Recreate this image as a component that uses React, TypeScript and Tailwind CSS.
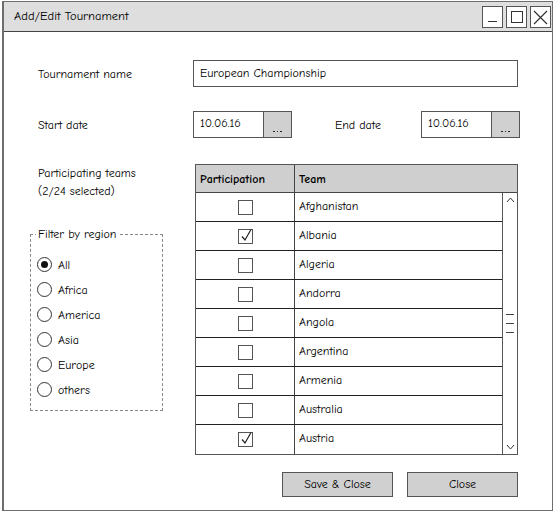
const font = { fontFamily: '"Comic Sans MS", "Comic Neue", "Liberation Sans", sans-serif' }

const teams = [
  { name: 'Afghanistan', on: false },
  { name: 'Albania', on: true },
  { name: 'Algeria', on: false },
  { name: 'Andorra', on: false },
  { name: 'Angola', on: false },
  { name: 'Argentina', on: false },
  { name: 'Armenia', on: false },
  { name: 'Australia', on: false },
  { name: 'Austria', on: true },
]

const regions = ['All', 'Africa', 'America', 'Asia', 'Europe', 'others']

function Checkbox({ on }: { on: boolean }) {
  return (
    <div className="relative w-[15px] h-[15px] border border-[#555] bg-white">
      {on && (
        <svg className="absolute left-[1px] -top-[2px]" width="14" height="15" viewBox="0 0 14 15">
          <path d="M2 8.5 L5 12 L11 1.5" fill="none" stroke="#222" strokeWidth="1.2" />
        </svg>
      )}
    </div>
  )
}

function Radio({ on }: { on: boolean }) {
  return (
    <div className="w-[15px] h-[15px] rounded-full border-[1.5px] border-[#333] flex items-center justify-center bg-white">
      {on && <div className="w-[7px] h-[7px] rounded-full bg-[#111]" />}
    </div>
  )
}

function DateField({ value }: { value: string }) {
  return (
    <div className="flex h-[27px]">
      <div className="w-[71px] border border-[#555] bg-white pl-[6px] flex items-center text-[12px] pb-[3px]">{value}</div>
      <div className="w-[28px] border border-l-0 border-[#555] bg-[#d0d0d0] flex items-end justify-center pb-[5px]">
        <div className="flex gap-[2px]">
          <div className="w-[1.5px] h-[1.5px] bg-[#222]" />
          <div className="w-[1.5px] h-[1.5px] bg-[#222]" />
          <div className="w-[1.5px] h-[1.5px] bg-[#222]" />
        </div>
      </div>
    </div>
  )
}

export default function App() {
  return (
    <div className="w-[556px] h-[513px] bg-white pt-[1px] pl-[2px] text-black" style={font}>
      <div className="w-[551px] h-[510px] border border-[#6e6e6e] border-l-2 flex flex-col">
        <div className="h-[30px] bg-[#dedede] border-b border-[#444] flex items-center justify-between pl-[10px] pr-[1px]">
          <span className="text-[12.5px]">Add/Edit Tournament</span>
          <div className="flex gap-[3px] pt-[1px]">
            <div className="w-[21px] h-[22px] border border-[#555] bg-white flex items-end justify-center pb-[5px]">
              <div className="w-[9px] h-[1.5px] bg-[#333]" />
            </div>
            <div className="w-[21px] h-[22px] border border-[#555] bg-white flex items-center justify-center">
              <div className="w-[12px] h-[12px] border-[1.5px] border-[#333]" />
            </div>
            <div className="w-[21px] h-[22px] border border-[#555] bg-white flex items-center justify-center">
              <svg width="15" height="15" viewBox="0 0 15 15">
                <path d="M1 1 L14 14 M14 1 L1 14" stroke="#333" strokeWidth="1.2" />
              </svg>
            </div>
          </div>
        </div>

        <div className="flex flex-col pt-[28px] pl-[34px]">
          <div className="flex items-center">
            <span className="w-[155px] text-[12px]">Tournament name</span>
            <div className="w-[325px] h-[27px] border border-[#555] bg-white pl-[6px] flex items-center text-[12px] pb-[2px]">
              European Championship
            </div>
          </div>

          <div className="flex items-center mt-[24px]">
            <span className="w-[155px] text-[12px]">Start date</span>
            <DateField value="10.06.16" />
            <span className="ml-[43px] w-[86px] text-[12px]">End date</span>
            <DateField value="10.06.16" />
          </div>

          <div className="flex mt-[26px]">
            <div className="w-[157px] flex flex-col">
              <div className="text-[12px] leading-[18px]">
                <div>Participating teams</div>
                <div>(2/24 selected)</div>
              </div>
              <fieldset className="mt-[27px] -ml-[8px] w-[133px] h-[184px] border border-dashed border-[#888] px-0">
                <legend className="ml-[5px] px-[2px] text-[12px] leading-[14px]">Filter by region</legend>
                <div className="flex flex-col gap-[10px] pl-[6px] pt-[16px]">
                  {regions.map((r, i) => (
                    <div key={r} className="flex items-center gap-[6px] h-[15px]">
                      <Radio on={i === 0} />
                      <span className="text-[12px]">{r}</span>
                    </div>
                  ))}
                </div>
              </fieldset>
            </div>

            <div className="flex flex-col">
              <div className="w-[323px] border border-[#555] flex flex-col">
                <div className="h-[28px] bg-[#cfcfcf] border-b border-[#444] flex text-[12px] font-bold">
                  <div className="w-[99px] border-r border-[#444] pl-[4px] flex items-center">Participation</div>
                  <div className="flex-1 pl-[4px] flex items-center">Team</div>
                </div>
                <div className="flex">
                  <div className="flex-1 flex flex-col">
                    {teams.map((t, i) => (
                      <div
                        key={t.name}
                        className={`h-[29px] flex text-[12px] ${i < teams.length - 1 ? 'border-b border-[#222]' : ''}`}
                      >
                        <div className="w-[99px] border-r border-[#444] flex items-center justify-center">
                          <Checkbox on={t.on} />
                        </div>
                        <div className="flex-1 pl-[4px] flex items-center pb-[3px]">{t.name}</div>
                      </div>
                    ))}
                  </div>
                  <div className="w-[15px] border-l border-[#555] flex flex-col items-center justify-between py-[4px]">
                    <svg width="9" height="6" viewBox="0 0 9 6">
                      <path d="M1 5 L4.5 1 L8 5" fill="none" stroke="#333" strokeWidth="1" />
                    </svg>
                    <div className="flex flex-col gap-[8px]">
                      <div className="w-[8px] h-[1px] bg-[#444]" />
                      <div className="w-[8px] h-[1px] bg-[#444]" />
                      <div className="w-[8px] h-[1px] bg-[#444]" />
                    </div>
                    <svg width="9" height="6" viewBox="0 0 9 6">
                      <path d="M1 1 L4.5 5 L8 1" fill="none" stroke="#333" strokeWidth="1" />
                    </svg>
                  </div>
                </div>
              </div>

              <div className="flex gap-[14px] mt-[17px] pl-[87px]">
                <button className="w-[111px] h-[25px] border border-[#555] bg-[#d0d0d0] text-[12px] pb-[2px]">Save &amp; Close</button>
                <button className="w-[111px] h-[25px] border border-[#555] bg-[#d0d0d0] text-[12px] pb-[2px]">Close</button>
              </div>
            </div>
          </div>
        </div>
      </div>
    </div>
  )
}
